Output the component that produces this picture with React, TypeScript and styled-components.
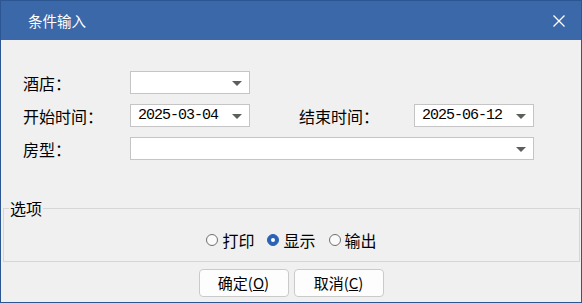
import React, { useState } from 'react';
import styled, { createGlobalStyle } from 'styled-components';

const GlobalStyle = createGlobalStyle`
  html, body {
    margin: 0;
    padding: 0;
    background: #f0f0f0;
  }
  * {
    box-sizing: border-box;
  }
`;

const Window = styled.div`
  width: 582px;
  height: 303px;
  border: 1px solid #2c5692;
  background: #f0f0f0;
  display: flex;
  flex-direction: column;
  font-family: 'Noto Sans CJK SC', 'Microsoft YaHei', sans-serif;
  font-size: 16px;
  color: #000;
`;

const TitleBar = styled.div`
  height: 39px;
  flex: none;
  background: #3b68a9;
  display: flex;
  align-items: center;
  justify-content: space-between;
  padding: 0 15px 0 27px;
`;

const Title = styled.span`
  color: #fff;
  font-size: 14.5px;
  line-height: 16px;
`;

const CloseButton = styled.button`
  width: 14px;
  height: 14px;
  padding: 0;
  border: none;
  background: transparent;
  display: flex;
  align-items: center;
  justify-content: center;
  cursor: pointer;
`;

const Form = styled.div`
  display: grid;
  grid-template-columns: 107px 120px 49px 115px 120px;
  grid-auto-rows: 23px;
  row-gap: 10px;
  margin-top: 31px;
  padding-left: 22px;
`;

const Label = styled.label<{ col?: number }>`
  grid-column: ${({ col }) => col ?? 1};
  display: flex;
  align-items: center;
  line-height: 18px;
  white-space: nowrap;
`;

const Combo = styled.div<{ span?: string }>`
  grid-column: ${({ span }) => span ?? 'auto'};
  background: #fff;
  border: 1px solid #c5c5c5;
  display: flex;
  align-items: center;
  justify-content: space-between;
  padding: 0 7px 0 7px;
`;

const ComboValue = styled.span`
  font-family: 'Liberation Mono', 'DejaVu Sans Mono', monospace;
  font-size: 15px;
  letter-spacing: -1px;
  line-height: 16px;
`;

const Arrow = styled.span`
  width: 0;
  height: 0;
  margin-left: auto;
  border-left: 5px solid transparent;
  border-right: 5px solid transparent;
  border-top: 5px solid #5b605a;
  margin-top: 1px;
`;

const OptionsGroup = styled.fieldset`
  margin: 40px 1px 0 2px;
  padding: 0 5px;
  height: 62px;
  border: 1px solid #d6d6d6;
`;

const Legend = styled.legend`
  padding: 0 1px;
  line-height: 16px;
  font-size: 16px;
`;

const RadioRow = styled.div`
  height: 45px;
  padding-top: 3px;
  display: flex;
  align-items: center;
  justify-content: center;
  gap: 13px;
`;

const RadioItem = styled.label`
  display: flex;
  align-items: center;
  gap: 4px;
  line-height: 18px;
  cursor: pointer;
`;

const RadioDot = styled.span<{ checked?: boolean }>`
  width: 12px;
  height: 12px;
  border-radius: 50%;
  flex: none;
  display: flex;
  align-items: center;
  justify-content: center;
  border: 1px solid ${({ checked }) => (checked ? '#2a62b5' : '#6f6f6f')};
  background: ${({ checked }) => (checked ? '#2a62b5' : '#fafafa')};
  &::after {
    content: '';
    width: 4px;
    height: 4px;
    border-radius: 50%;
    background: ${({ checked }) => (checked ? '#fff' : 'transparent')};
  }
`;

const Actions = styled.div`
  margin-top: 7px;
  display: flex;
  justify-content: center;
  gap: 5px;
`;

const Button = styled.button`
  width: 90px;
  height: 28px;
  padding: 0;
  background: #fdfdfd;
  border: 1px solid #cacaca;
  border-radius: 4px;
  font-family: inherit;
  font-size: 15px;
  line-height: 18px;
  color: #000;
  cursor: pointer;
`;

const Mnemonic = styled.span`
  text-decoration: underline;
`;

const options = ['打印', '显示', '输出'];

export default function App() {
  const [mode, setMode] = useState('显示');

  return (
    <>
      <GlobalStyle />
      <Window>
        <TitleBar>
          <Title>条件输入</Title>
          <CloseButton aria-label="关闭">
            <svg width="12" height="12" viewBox="0 0 12 12">
              <path d="M0.5 0.5 L11.5 11.5 M11.5 0.5 L0.5 11.5" stroke="#fff" strokeWidth="1.3" />
            </svg>
          </CloseButton>
        </TitleBar>

        <Form>
          <Label>酒店：</Label>
          <Combo>
            <Arrow />
          </Combo>

          <Label>开始时间：</Label>
          <Combo>
            <ComboValue>2025-03-04</ComboValue>
            <Arrow />
          </Combo>
          <Label col={4}>结束时间：</Label>
          <Combo>
            <ComboValue>2025-06-12</ComboValue>
            <Arrow />
          </Combo>

          <Label>房型：</Label>
          <Combo span="2 / 6">
            <Arrow />
          </Combo>
        </Form>

        <OptionsGroup>
          <Legend>选项</Legend>
          <RadioRow>
            {options.map((o) => (
              <RadioItem key={o} onClick={() => setMode(o)}>
                <RadioDot checked={mode === o} />
                {o}
              </RadioItem>
            ))}
          </RadioRow>
        </OptionsGroup>

        <Actions>
          <Button>
            确定(<Mnemonic>O</Mnemonic>)
          </Button>
          <Button>
            取消(<Mnemonic>C</Mnemonic>)
          </Button>
        </Actions>
      </Window>
    </>
  );
}
